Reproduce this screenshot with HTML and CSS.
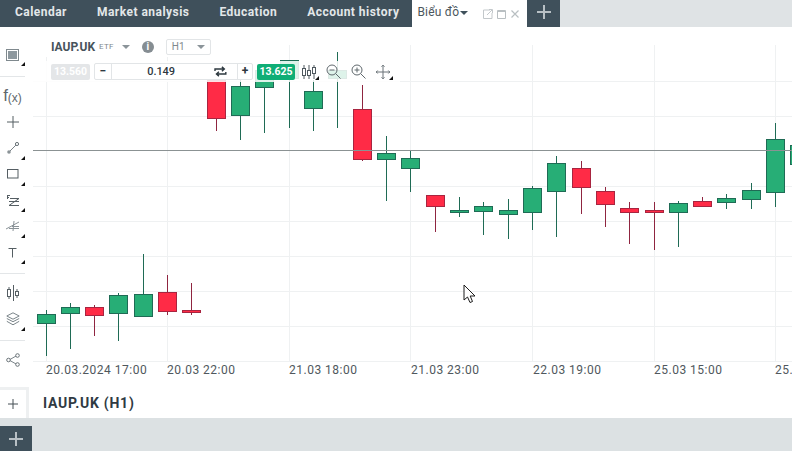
FILE: index.html
```html
<!DOCTYPE html>
<html lang="en">
<head>
  <meta charset="UTF-8" />
  <title>IAUP.UK chart</title>
  <link rel="stylesheet" href="styles.css">
</head>
<body>
  <!-- Top tabs -->
  <div class="topbar">
    <a class="tab">Calendar</a>
    <a class="tab">Market analysis</a>
    <a class="tab">Education</a>
    <a class="tab">Account history</a>
    <div class="tab-active">
      <span class="tab-name">Biểu đồ</span>
      <span class="tab-caret"></span>
      <svg class="tab-icons" width="42" height="12" viewBox="0 0 42 12">
        <path d="M8 2H1.500v8.500H10V5M5 7l5-5M7 1.500h3.500V5" fill="none" stroke="#c3c8cb"/>
        <path d="M15.500 2.500h8v8h-8zM15.500 3.500h8" fill="none" stroke="#b9bfc2"/>
        <path d="M29.500 2.500l7 7M36.500 2.500l-7 7" fill="none" stroke="#b9bfc2" stroke-width="1.200"/>
      </svg>
    </div>
    <div class="tab-add"><span class="plus"></span></div>
  </div>

  <div class="workspace">
    <!-- Left tools -->
    <div class="sidebar">
      <div class="tool tool-first corner">
        <svg width="13" height="12" viewBox="0 0 13 12"><rect x="0.500" y="0.500" width="12" height="11" fill="#fff" stroke="#7f898e"/><rect x="2" y="2" width="9" height="8" fill="#8d989e"/></svg>
      </div>
      <div class="tool tool-fx">f<span>(x)</span></div>
      <div class="tool">
        <svg width="12" height="12" viewBox="0 0 12 12"><path d="M6 0v12M0 6h12" stroke="#555e63" fill="none"/></svg>
      </div>
      <div class="tool corner">
        <svg width="12" height="12" viewBox="0 0 12 12"><path d="M2 10l8-8" stroke="#7b8388"/><circle cx="2" cy="10" r="1.800" fill="#8b9397"/><circle cx="10" cy="2" r="1.600" fill="#fff" stroke="#6a7378"/></svg>
      </div>
      <div class="tool corner">
        <svg width="12" height="10" viewBox="0 0 12 10"><rect x="0.500" y="0.500" width="10.500" height="8.500" fill="none" stroke="#555e63"/></svg>
      </div>
      <div class="tool corner">
        <svg width="14" height="13" viewBox="0 0 14 13"><path d="M1 1.500h3M1.500 1v4M1 3.500h2M4 4.500h9L3 11.500h10M3 7.500h10" fill="none" stroke="#555e63"/></svg>
      </div>
      <div class="tool corner">
        <svg width="14" height="12" viewBox="0 0 14 12"><path d="M0 9l13-7M3 8.500h10M6 6.500h7M8 1l-1 10" fill="none" stroke="#8a9297"/></svg>
      </div>
      <div class="tool corner">
        <svg width="10" height="11" viewBox="0 0 10 11"><path d="M0.500 1.500h8M4.500 1.500V10.500" fill="none" stroke="#555e63"/></svg>
      </div>
      <div class="tool-rule"></div>
      <div class="tool">
        <svg width="14" height="16" viewBox="0 0 14 16"><path d="M7.500 0v16M3 2v12M11 4v9" stroke="#555e63"/><rect x="1.500" y="4.500" width="3" height="7" fill="#fff" stroke="#555e63"/><rect x="9.500" y="6.500" width="3" height="4" fill="#fff" stroke="#555e63"/></svg>
      </div>
      <div class="tool corner">
        <svg width="14" height="14" viewBox="0 0 14 14"><path d="M7 .8L13.200 4 7 7.200.8 4zM.8 6.500L7 9.700l6.200-3.200M.8 9.300L7 12.800l6.200-3.500" fill="none" stroke="#7b858a"/></svg>
      </div>
      <div class="tool-rule"></div>
      <div class="tool">
        <svg width="14" height="14" viewBox="0 0 14 14"><path d="M3 7l8-4.500M3 7l8 4.500" stroke="#7b858a"/><circle cx="2.500" cy="7" r="1.800" fill="#fff" stroke="#6a7378"/><circle cx="11.500" cy="2.500" r="1.800" fill="#fff" stroke="#6a7378"/><circle cx="11.500" cy="11.500" r="1.800" fill="#fff" stroke="#6a7378"/></svg>
      </div>
    </div>

    <div class="chart-area">
      <svg class="chart" width="759" height="360" viewBox="33 27 759 360">
        <g class="grid">
          <path d="M33 81.500H792M33 116.500H792M33 186.500H792M33 221.500H792M33 256.500H792M33 291.500H792M33 326.500H792M33 361.500H792"/>
          <path d="M46.500 45V361M167.500 45V361M289.500 45V361M410.500 45V361M532.500 45V361M654.500 45V361M775.500 45V361"/>
        </g>

        <g class="up">
          <path d="M46.500 310V356M70.500 303V349M118.500 293V341M143.500 254V294M264.500 70V133M240.500 80V140M289.500 78V128M313.500 80V131M337.500 52V128M386.500 136V201M410.500 151V192M459.500 197V217M483.500 202V235M508.500 199V239M532.500 186V230M556.500 156V237M678.500 201V247M726.500 194V209M751.500 183V209M775.500 123V207"/>
          <rect x="37.500" y="314.500" width="18" height="9"/>
          <rect x="61.500" y="307.500" width="18" height="6"/>
          <rect x="109.500" y="295.500" width="18" height="18"/>
          <rect x="134.500" y="294.500" width="18" height="22"/>
          <rect x="231.500" y="86.500" width="18" height="29"/>
          <rect x="255.500" y="70.500" width="18" height="17"/>
          <rect x="280.500" y="60.500" width="18" height="18"/>
          <rect x="304.500" y="91.500" width="18" height="17"/>
          <rect x="328.500" y="70.500" width="18" height="8"/>
          <rect x="377.500" y="153.500" width="18" height="6"/>
          <rect x="401.500" y="158.500" width="18" height="10"/>
          <rect x="450.500" y="210.500" width="18" height="2"/>
          <rect x="474.500" y="206.500" width="18" height="5"/>
          <rect x="499.500" y="210.500" width="18" height="4"/>
          <rect x="523.500" y="188.500" width="18" height="24"/>
          <rect x="547.500" y="163.500" width="18" height="28"/>
          <rect x="669.500" y="203.500" width="18" height="9"/>
          <rect x="717.500" y="198.500" width="18" height="4"/>
          <rect x="742.500" y="190.500" width="18" height="9"/>
          <rect x="766.500" y="139.500" width="18" height="53"/>
          <rect x="790.500" y="145.500" width="18" height="19"/>
        </g>

        <g class="down">
          <path d="M94.500 305V336M167.500 275V315M191.500 283V315M216.500 80V131M362.500 85V161M435.500 195V232M581.500 161V214M605.500 187V227M629.500 202V244M654.500 202V250M702.500 197V207"/>
          <rect x="85.500" y="307.500" width="18" height="8"/>
          <rect x="158.500" y="292.500" width="18" height="19"/>
          <rect x="182.500" y="310.500" width="18" height="2"/>
          <rect x="207.500" y="80.500" width="18" height="38"/>
          <rect x="353.500" y="109.500" width="18" height="50"/>
          <rect x="426.500" y="195.500" width="18" height="11"/>
          <rect x="572.500" y="168.500" width="18" height="19"/>
          <rect x="596.500" y="191.500" width="18" height="13"/>
          <rect x="620.500" y="208.500" width="18" height="4"/>
          <rect x="645.500" y="210.500" width="18" height="2"/>
          <rect x="693.500" y="201.500" width="18" height="5"/>
        </g>

        <path class="price-line" d="M33 150.500H792"/>

        <g class="axis">
          <text x="46" y="374">20.03.2024 17:00</text>
          <text x="167" y="374">20.03 22:00</text>
          <text x="289" y="374">21.03 18:00</text>
          <text x="411" y="374">21.03 23:00</text>
          <text x="533" y="374">22.03 19:00</text>
          <text x="654" y="374">25.03 15:00</text>
          <text x="775" y="374">25.03 20:00</text>
        </g>
      </svg>

      <!-- Instrument panel lies over the chart -->
      <div class="overlay">
        <div class="symbol-row">
          <span class="symbol">IAUP.UK</span>
          <span class="symbol-type">ETF</span>
          <span class="caret caret-symbol"></span>
          <span class="info">i</span>
          <span class="period">H1 <span class="caret"></span></span>
        </div>
        <div class="trade-row">
          <span class="sell">13.560</span>
          <div class="amount">
            <span class="step">&minus;</span>
            <span class="qty">0.149</span>
            <svg class="swap" width="13" height="11" viewBox="0 0 13 11"><path d="M1 5V3h9M8 .8L10.500 3 8 5.200M12 6v2H3M5 5.800L2.500 8 5 10.200" fill="none" stroke="#2d383f" stroke-width="1.400"/></svg>
            <span class="step step-plus">+</span>
          </div>
          <span class="buy">13.625</span>
          <div class="chart-tools">
            <span class="tool-btn corner">
              <svg width="14" height="14" viewBox="0 0 14 14"><path d="M2 0v14M7 0v14M12 0v14" stroke="#4e585e"/><rect x="0.500" y="3.500" width="3" height="7" fill="#fff" stroke="#4e585e"/><rect x="5.500" y="5.500" width="3" height="5" fill="#fff" stroke="#4e585e"/><rect x="10.500" y="2.500" width="3" height="6" fill="#fff" stroke="#4e585e"/></svg>
            </span>
            <span class="tool-btn">
              <svg width="15" height="15" viewBox="0 0 15 15"><circle cx="6" cy="6" r="5" fill="none" stroke="#5f686d"/><path d="M3.500 6h5M9.700 9.700l4.800 4.800" stroke="#5f686d" fill="none"/></svg>
            </span>
            <span class="tool-btn">
              <svg width="15" height="15" viewBox="0 0 15 15"><circle cx="6" cy="6" r="5" fill="none" stroke="#5f686d"/><path d="M3.500 6h5M6 3.500v5M9.700 9.700l4.800 4.800" stroke="#5f686d" fill="none"/></svg>
            </span>
            <span class="tool-btn corner">
              <svg width="14" height="14" viewBox="0 0 14 14"><path d="M7 0v14M0 7h14M5.500 1.700L7 .2l1.500 1.500M5.500 12.300L7 13.800l1.500-1.500M1.700 5.500L.2 7l1.500 1.500M12.300 5.500L13.800 7l-1.500 1.500" fill="none" stroke="#6a7378"/></svg>
            </span>
          </div>
        </div>
      </div>

      <!-- Mouse pointer from the capture -->
      <svg class="pointer" width="13" height="20" viewBox="0 0 13 20"><path d="M1 1v15l3.500-3 2.500 5.500 2.500-1L7.200 12H12z" fill="#fff" stroke="#1c1c1c"/></svg>
    </div>
  </div>

  <!-- Panel title row -->
  <div class="title-row">
    <div class="title-add"><svg width="12" height="12" viewBox="0 0 12 12"><path d="M6 1v10M1 6h10" stroke="#454e54" fill="none"/></svg></div>
    <div class="title">IAUP.UK (H1)</div>
  </div>

  <div class="footer">
    <div class="footer-add"><span class="plus"></span></div>
  </div>
</body>
</html>
```

FILE: styles.css
```css
html, body {
  margin: 0;
  padding: 0;
}

body {
  width: 792px;
  height: 451px;
  overflow: hidden;
  background: #fff;
  font-family: 'Roboto', 'Liberation Sans', sans-serif;
}

/* top tabs */
.topbar {
  display: flex;
  height: 27px;
  background: #dfe3e5;
}

.tab {
  display: flex;
  align-items: center;
  height: 24px;
  padding: 0 15px 3px;
  background: #3f505b;
  color: #e3e7e9;
  font-size: 12px;
  font-weight: 700;
  letter-spacing: 0.47px;
  white-space: nowrap;
}

.tab-active {
  display: flex;
  align-items: center;
  width: 115px;
  height: 27px;
  margin-left: -2px;
  padding-left: 5px;
  box-sizing: border-box;
  background: #fff;
  color: #4b565d;
  font-size: 12px;
}

.tab-name {
  letter-spacing: 0.2px;
  margin-top: -3px;
}

.tab-caret {
  width: 0;
  height: 0;
  margin: -2px 0 0 1px;
  border: 4px solid transparent;
  border-top-color: #3f505b;
  border-bottom: 0;
}

.tab-icons {
  margin-left: 14px;
}

.tab-add {
  display: flex;
  align-items: center;
  justify-content: center;
  width: 33px;
  height: 24px;
  padding-bottom: 3px;
  background: #3f505b;
}

.plus {
  display: block;
  width: 14px;
  height: 14px;
  background:
    linear-gradient(#b8c0c5, #b8c0c5) center / 14px 2px no-repeat,
    linear-gradient(#b8c0c5, #b8c0c5) center / 2px 14px no-repeat;
}

/* main area */
.workspace {
  display: flex;
  height: 360px;
}

.sidebar {
  display: flex;
  flex-direction: column;
  align-items: stretch;
  width: 25px;
  flex-shrink: 0;
  padding-top: 14px;
}

.tool {
  position: relative;
  display: flex;
  align-items: center;
  justify-content: center;
  height: 26px;
  color: #5f686d;
}

.tool-first {
  height: 36px;
  margin-bottom: 6px;
  border-bottom: 1px solid #e3e6e8;
  box-sizing: border-box;
  padding-bottom: 8px;
}

.tool-first.corner::after {
  bottom: 10px;
}

.tool-fx {
  font-family: 'Liberation Sans', sans-serif;
  font-size: 17px;
}

.tool-fx span {
  font-size: 12px;
  margin-top: 3px;
}

.tool-rule {
  height: 1px;
  margin: 8px 0 6px;
  background: #e3e6e8;
}

.corner::after {
  content: "";
  position: absolute;
  right: 0;
  bottom: 1px;
  border: 2px solid transparent;
  border-right-color: #111;
  border-bottom-color: #111;
}

.chart-area {
  position: relative;
  flex: 1;
  margin-left: 8px;
}

.chart {
  display: block;
}

.grid path {
  fill: none;
  stroke: #eff1f2;
}

.up path {
  fill: none;
  stroke: #1f6b55;
}

.up rect {
  fill: #27ae76;
  stroke: #1f6b55;
}

.down path {
  fill: none;
  stroke: #8f2540;
}

.down rect {
  fill: #ff2b46;
  stroke: #a82540;
}

.price-line {
  fill: none;
  stroke: #8b9293;
}

.axis text {
  fill: #50585d;
  font-family: 'Roboto', sans-serif;
  font-size: 12px;
  letter-spacing: 0.5px;
}

/* instrument panel over the chart */
.overlay {
  position: absolute;
  left: 0;
  top: 9px;
  width: 367px;
}

.symbol-row {
  display: flex;
  align-items: center;
  width: 170px;
  height: 21px;
  padding-left: 18px;
  background: #fff;
}

.symbol {
  color: #47535b;
  font-size: 12px;
  font-weight: 700;
}

.symbol-type {
  margin-left: 4px;
  color: #7f888d;
  font-size: 8px;
  letter-spacing: 0.3px;
}

.caret {
  display: inline-block;
  width: 0;
  height: 0;
  border: 4px solid transparent;
  border-top-color: #8b9499;
  border-bottom: 0;
}

.caret-symbol {
  margin-left: 8px;
}

.info {
  display: flex;
  align-items: center;
  justify-content: center;
  width: 12px;
  height: 12px;
  margin-left: 12px;
  border-radius: 50%;
  background: #858d92;
  color: #fff;
  font-size: 10px;
  font-weight: 700;
}

.period {
  display: flex;
  align-items: center;
  justify-content: space-between;
  width: 33px;
  height: 14px;
  margin-left: 12px;
  padding: 0 5px;
  border: 1px solid #e2e5e7;
  border-radius: 2px;
  color: #7f888d;
  font-size: 10px;
}

.trade-row {
  display: flex;
  align-items: center;
  height: 21px;
  margin-top: 4px;
  padding-left: 18px;
  background: rgba(255, 255, 255, 0.85);
}

.sell {
  width: 39px;
  height: 16px;
  line-height: 16px;
  border-radius: 2px;
  background: #e4e6e8;
  color: #fff;
  text-align: center;
  font-size: 10.5px;
  font-weight: 700;
}

.amount {
  display: flex;
  align-items: center;
  width: 157px;
  height: 15px;
  margin-left: 4px;
  border: 1px solid #e2e5e7;
  border-radius: 2px;
  background: #fff;
}

.step {
  width: 16px;
  border-right: 1px solid #e2e5e7;
  color: #2d383f;
  text-align: center;
  font-size: 12px;
  font-weight: 700;
  line-height: 15px;
}

.step-plus {
  width: 14px;
  border-right: 0;
  border-left: 1px solid #e2e5e7;
}

.qty {
  width: 100px;
  color: #2d383f;
  text-align: center;
  font-size: 11px;
  font-weight: 500;
  letter-spacing: -0.1px;
}

.swap {
  margin: 0 10px 0 4px;
}

.buy {
  width: 38px;
  height: 16px;
  line-height: 16px;
  margin-left: 4px;
  border-radius: 2px;
  background: #0fae76;
  color: #fff;
  text-align: center;
  font-size: 10.5px;
  font-weight: 700;
}

.chart-tools {
  display: flex;
  align-items: center;
  gap: 10px;
  margin-left: 7px;
}

.tool-btn {
  position: relative;
  display: flex;
}

.tool-btn.corner::after {
  right: -3px;
  bottom: -1px;
}

.pointer {
  position: absolute;
  left: 430px;
  top: 257px;
}

/* title row */
.title-row {
  display: flex;
  height: 31px;
}

.title-add {
  display: flex;
  align-items: center;
  justify-content: center;
  width: 26px;
  border-top: 3px solid #eef0f1;
  border-right: 3px solid #eef0f1;
}

.title {
  margin-left: 14px;
  color: #2f3a43;
  font-size: 14px;
  font-weight: 700;
  letter-spacing: 0.75px;
  line-height: 32px;
}

.footer {
  display: flex;
  align-items: flex-end;
  height: 33px;
  background: #dce1e3;
}

.footer-add {
  display: flex;
  align-items: center;
  justify-content: center;
  width: 32px;
  height: 25px;
  background: #3f505b;
}
```
